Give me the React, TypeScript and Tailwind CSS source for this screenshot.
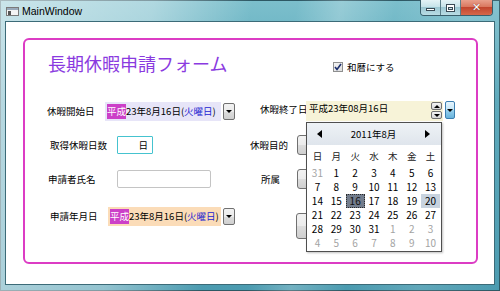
import React from 'react';

const JP = "font-['Noto_Sans_CJK_JP',sans-serif]";

type Day = { d: number; out?: boolean };

const WEEKS: Day[][] = [
    [{ d: 31, out: true }, { d: 1 }, { d: 2 }, { d: 3 }, { d: 4 }, { d: 5 }, { d: 6 }],
    [{ d: 7 }, { d: 8 }, { d: 9 }, { d: 10 }, { d: 11 }, { d: 12 }, { d: 13 }],
    [{ d: 14 }, { d: 15 }, { d: 16 }, { d: 17 }, { d: 18 }, { d: 19 }, { d: 20 }],
    [{ d: 21 }, { d: 22 }, { d: 23 }, { d: 24 }, { d: 25 }, { d: 26 }, { d: 27 }],
    [{ d: 28 }, { d: 29 }, { d: 30 }, { d: 31 }, { d: 1, out: true }, { d: 2, out: true }, { d: 3, out: true }],
    [4, 5, 6, 7, 8, 9, 10].map((d) => ({ d, out: true })),
];

const WEEKDAYS = ['日', '月', '火', '水', '木', '金', '土'];

function DownArrow() {
    return <div className="w-0 h-0 border-l-[3px] border-r-[3px] border-t-[3px] border-l-transparent border-r-transparent border-t-black" />;
}

function DropButton({ active = false }: { active?: boolean }) {
    if (active) {
        return (
            <div className="ml-[2px] w-[10px] h-[18px] rounded-[2px] border border-[#3c7fb1] bg-[linear-gradient(180deg,#e5f4fc_0%,#c4e5f6_50%,#98d1ef_50%,#68b3db_100%)] flex items-center justify-center">
                <DownArrow />
            </div>
        );
    }
    return (
        <div className="ml-[2px] w-[12px] h-[17px] rounded-[2px] border border-[#707070] bg-[linear-gradient(180deg,#f2f2f2_0%,#ebebeb_50%,#dddddd_50%,#cfcfcf_100%)] flex items-center justify-center">
            <DownArrow />
        </div>
    );
}

function EraDate({ bg, width }: { bg: string; width: string }) {
    return (
        <div className="flex items-center">
            <div className={`${bg} ${width} h-[19px] pl-[2px] flex items-center text-[9.5px] leading-[15px] whitespace-nowrap text-black`}>
                <span className="bg-[#cc40c8] text-white">平成</span>
                <span>23年8月16日(</span>
                <span className="text-[#2424d0]">火曜日</span>
                <span>)</span>
            </div>
            <DropButton />
        </div>
    );
}

function GrayButton({ tall = false }: { tall?: boolean }) {
    return (
        <div
            className={
                tall
                    ? 'self-start mt-[7px] w-[140px] h-[26px] rounded-[3px] border border-[#707070] bg-[linear-gradient(180deg,#f2f2f2_0%,#ebebeb_50%,#dddddd_50%,#cfcfcf_100%)]'
                    : 'w-[140px] h-[20px] rounded-[3px] border border-[#707070] bg-[linear-gradient(180deg,#f2f2f2_0%,#ebebeb_50%,#dddddd_50%,#cfcfcf_100%)]'
            }
        />
    );
}

function Calendar() {
    return (
        <div className="absolute left-0 top-[21px] z-10 w-[136px] border border-[#4f4f4f] bg-white shadow-[1px_1px_2px_rgba(0,0,0,0.25)]">
            {/* header */}
            <div className="h-[22px] bg-[linear-gradient(180deg,#eef2f6_0%,#dfe5ec_100%)] flex items-center justify-between pl-[10px] pr-[11px]">
                <div className="w-0 h-0 border-t-[4px] border-b-[4px] border-r-[5px] border-t-transparent border-b-transparent border-r-black" />
                <span className="text-[9.5px] leading-[12px] text-black">2011年8月</span>
                <div className="w-0 h-0 border-t-[4px] border-b-[4px] border-l-[5px] border-t-transparent border-b-transparent border-l-black" />
            </div>

            {/* weekdays */}
            <div className="mt-[3px] h-[16px] grid grid-cols-7 px-[1px]">
                {WEEKDAYS.map((w) => (
                    <div key={w} className="flex items-center justify-center text-[9.5px] text-[#222]">
                        {w}
                    </div>
                ))}
            </div>

            {/* days */}
            <div className="mt-[2px] pb-[1px] px-[1px] grid grid-cols-7">
                {WEEKS.flat().map((day, i) => {
                    const selected = !day.out && day.d === 16;
                    const today = !day.out && day.d === 20;
                    let cls = 'h-[14px] flex items-center justify-center text-[10px] leading-[12px] ';
                    if (selected) cls += 'bg-[#737d8d] text-[#111] outline outline-1 outline-dotted outline-[#2a2a2a] -outline-offset-1';
                    else if (today) cls += 'bg-[#c8d3df] text-black';
                    else if (day.out) cls += 'text-[#a3a3a3]';
                    else cls += 'text-black';
                    return (
                        <div key={i} className={cls}>
                            {day.d}
                        </div>
                    );
                })}
            </div>
        </div>
    );
}

function CaptionButtons() {
    return (
        <div className="ml-auto mr-[7px] flex h-[16px] rounded-b-[4px] border border-t-0 border-[#3a5f6c] overflow-hidden">
            <div className="w-[20px] h-full border-r border-[#5b7f8a] bg-[linear-gradient(180deg,#e4f3f6_0%,#c3e1e8_50%,#9dc8d3_50%,#b9dde5_100%)] flex items-center justify-center">
                <div className="mt-[4px] w-[9px] h-[3px] bg-white border border-[#3a4a55]" />
            </div>
            <div className="w-[20px] h-full border-r border-[#5b7f8a] bg-[linear-gradient(180deg,#e4f3f6_0%,#c3e1e8_50%,#9dc8d3_50%,#b9dde5_100%)] flex items-center justify-center">
                <div className="w-[9px] h-[8px] border border-[#3a4a55] bg-white flex items-center justify-center">
                    <div className="w-[5px] h-[3px] mt-[1px] border border-[#3a4a55] bg-[#cfe6ec]" />
                </div>
            </div>
            <div className="w-[31px] h-full bg-[linear-gradient(180deg,#e9a08c_0%,#d8735a_50%,#c2462e_50%,#d6684a_100%)] flex items-center justify-center">
                <span className="font-['DejaVu_Sans',sans-serif] text-[11px] leading-[11px] font-bold text-white [text-shadow:0_0_1px_#5a1a10]">✕</span>
            </div>
        </div>
    );
}

export default function App() {
    return (
        <div className={`w-[500px] h-[291px] flex flex-col overflow-hidden relative bg-[linear-gradient(180deg,#7cbfcc_0%,#55a5b8_35%,#4b9bb0_100%)] shadow-[inset_0_0_0_1px_#2d5864] ${JP}`}>
            {/* glass streaks */}
            <div className="absolute inset-0 pointer-events-none bg-[linear-gradient(100deg,rgba(255,255,255,0.6)_0%,rgba(255,255,255,0.4)_28%,rgba(255,255,255,0)_46%,rgba(255,255,255,0)_54%,rgba(255,255,255,0.22)_62%,rgba(255,255,255,0)_72%,rgba(255,255,255,0.12)_85%,rgba(255,255,255,0)_100%)]" />

            {/* ===== TITLE BAR ===== */}
            <div className="relative h-[21px] flex items-start shrink-0">
                <svg className="ml-[6px] mt-[7px]" width="13" height="9" viewBox="0 0 13 9">
                    <rect x="0.5" y="0.5" width="12" height="8" fill="#f4f4f4" stroke="#7a7a7a" />
                    <rect x="1" y="1" width="11" height="2" fill="#9ab" />
                    <rect x="2" y="4" width="3" height="4" fill="#555" />
                </svg>
                <span className="ml-[3px] mt-[5px] font-['Liberation_Sans',sans-serif] text-[10.5px] leading-[12px] text-black">MainWindow</span>
                <CaptionButtons />
            </div>

            {/* ===== CLIENT ===== */}
            <div className="relative mx-[5px] mb-[6px] h-[264px] bg-white border border-[#3c6b78] pl-[17px] pt-[16px]">
                <div className="w-[455px] h-[226px] border-2 border-[#dc3cc4] rounded-[6px] flex flex-col">
                    {/* header */}
                    <div className="h-[61px] flex items-start">
                        <div className="ml-[23px] mt-[13px] w-[285px] text-[18px] leading-[20px] text-[#8a3ae0] whitespace-nowrap">
                            長期休暇申請フォーム
                        </div>
                        <div className="mt-[22px] h-[10px] flex items-center gap-[4px]">
                            <div className="w-[10px] h-[10px] border border-[#8e8f8f] bg-[linear-gradient(135deg,#f4f4f4,#dedede)] flex items-center justify-center">
                                <svg width="8" height="8" viewBox="0 0 8 8">
                                    <path d="M1 4 L3 6.5 L7 1" fill="none" stroke="#1c2f6e" strokeWidth="1.6" />
                                </svg>
                            </div>
                            <span className="text-[9.5px] leading-[10px] text-black whitespace-nowrap">和暦にする</span>
                        </div>
                    </div>

                    {/* row 1 */}
                    <div className="h-[20px] flex items-center">
                        <div className="w-[80px] pl-[22px] text-[9.5px] whitespace-nowrap">休暇開始日</div>
                        <EraDate bg="bg-[#e7e5f8]" width="w-[116px]" />
                        <div className="ml-[25px] w-[46px] text-[9.5px] whitespace-nowrap -mt-[3px]">休暇終了日</div>
                        <div className="relative flex items-start">
                            <div className="w-[137px] h-[20px] bg-[#f7f3d8] flex items-start">
                                <span className="pl-[3px] pt-[1px] text-[9.5px] leading-[12px] text-black whitespace-nowrap">平成23年08月16日</span>
                                <div className="ml-auto mr-[1px] flex flex-col gap-[1px] pt-[1px]">
                                    <div className="w-[11px] h-[8px] rounded-[2px] border border-[#707070] bg-[linear-gradient(180deg,#f4f4f4,#d6d6d6)] flex items-center justify-center">
                                        <div className="w-0 h-0 border-l-[3px] border-r-[3px] border-b-[3px] border-l-transparent border-r-transparent border-b-black" />
                                    </div>
                                    <div className="w-[11px] h-[8px] rounded-[2px] border border-[#707070] bg-[linear-gradient(180deg,#f4f4f4,#d6d6d6)] flex items-center justify-center">
                                        <DownArrow />
                                    </div>
                                </div>
                            </div>
                            <DropButton active />
                            <Calendar />
                        </div>
                    </div>

                    {/* row 2 */}
                    <div className="mt-[14px] h-[20px] flex items-center">
                        <div className="w-[92px] pl-[25px] text-[9.5px] whitespace-nowrap">取得休暇日数</div>
                        <div className="w-[36px] h-[18px] border-[1.5px] border-[#45c3cf] rounded-[1px] flex items-center justify-end pr-[4px] text-[9.5px]">
                            日
                        </div>
                        <div className="ml-[97px] w-[47px] text-[9.5px] whitespace-nowrap">休暇目的</div>
                        <GrayButton />
                    </div>

                    {/* row 3 */}
                    <div className="mt-[15px] h-[18px] flex items-center">
                        <div className="w-[92px] pl-[23px] text-[9.5px] whitespace-nowrap">申請者氏名</div>
                        <div className="w-[94px] h-[18px] border border-[#c4c4c4] rounded-[2px] bg-white" />
                        <div className="ml-[50px] w-[36px] text-[9.5px] whitespace-nowrap">所属</div>
                        <GrayButton />
                    </div>

                    {/* row 4 */}
                    <div className="mt-[18px] h-[20px] flex items-center">
                        <div className="w-[83px] pl-[25px] text-[9.5px] whitespace-nowrap">申請年月日</div>
                        <EraDate bg="bg-[#fbdcb8]" width="w-[113px]" />
                        <div className="ml-[61px]" />
                        <GrayButton tall />
                    </div>
                </div>
            </div>
        </div>
    );
}
